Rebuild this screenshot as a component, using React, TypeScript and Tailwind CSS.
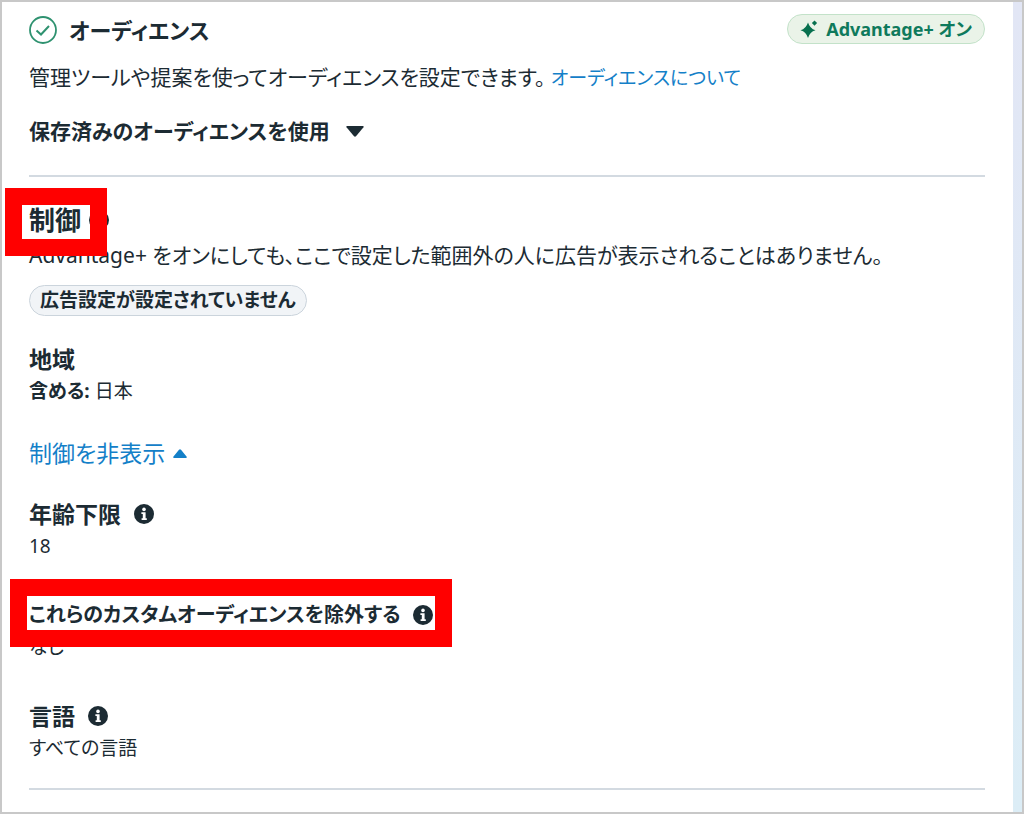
import type { ReactNode } from 'react'

function InfoButton({ label }: { label: string }) {
    return (
        <button type="button" aria-label={label} className="shrink-0 text-[#1c2b33]">
            <svg viewBox="0 0 20 20" className="size-5" aria-hidden="true">
                <circle cx="10" cy="10" r="10" fill="currentColor" />
                <circle cx="10" cy="5.4" r="1.8" fill="#fff" />
                <path d="M7.4 8.2h4.2v6h1.2v1.8H7.6v-1.8h1.2V10H7.4z" fill="#fff" />
            </svg>
        </button>
    )
}

type FieldProps = {
    title: string
    info?: boolean
    highlighted?: boolean
    className: string
    children: ReactNode
}

function Field({ title, info, highlighted, className, children }: FieldProps) {
    return (
        <section className={className}>
            <div className="relative flex h-8 w-fit items-center gap-[13px]">
                <h3 className={`leading-8 font-bold ${highlighted ? 'text-xl' : 'text-[23px]'}`}>{title}</h3>
                {info && <InfoButton label={`${title}の詳細`} />}
                {highlighted && (
                    <span className="pointer-events-none absolute -inset-x-[19px] -top-5 -bottom-4 border-[17px] border-[#ff0000]" />
                )}
            </div>
            <p className="text-[19px] leading-8">{children}</p>
        </section>
    )
}

export default function App() {
    return (
        <div
            lang="ja"
            className="flex min-h-screen border-2 border-[#c8c8c8] bg-white font-['Noto_Sans','Noto_Sans_CJK_JP',sans-serif] text-[#1c2b33] [font-feature-settings:'palt']"
        >
            <main className="min-w-0 flex-1 pr-7 pb-5 pl-[27px]">
                <header className="flex items-start justify-between pt-3">
                    <div className="flex items-center gap-3">
                        <svg viewBox="0 0 28 28" className="size-7" fill="none" stroke="#2f9270" aria-hidden="true">
                            <circle cx="14" cy="14" r="13" strokeWidth="1.8" />
                            <path d="M7.5 14.5l4.5 4 8-8.5" strokeWidth="2" />
                        </svg>
                        <h1 className="text-[22px] leading-8 font-bold">オーディエンス</h1>
                    </div>
                    <span className="flex h-[30px] items-center gap-2 rounded-full border border-[#c3e2c9] bg-[#eaf3e8] px-3 text-lg font-bold text-[#0f7a5c]">
                        <svg viewBox="0 0 18 18" className="size-[18px]" fill="#08704f" aria-hidden="true">
                            <path d="M8 2.5Q9.8 8.500 15.500 10.300Q9.800 12 8 18Q6.200 12 .5 10.300Q6.200 8.500 8 2.500z" />
                            <path d="M14.5.5l2.6 2.6-2.6 2.6-2.6-2.6z" />
                        </svg>
                        Advantage+ オン
                    </span>
                </header>

                <p className="mt-[15px] text-[21px] leading-8">
                    管理ツールや提案を使ってオーディエンスを設定できます。{' '}
                    <a href="#about" className="text-[19px] text-[#1480c8]">
                        オーディエンスについて
                    </a>
                </p>

                <button type="button" className="mt-[21px] flex items-center gap-4 text-[21px] leading-8 font-bold">
                    保存済みのオーディエンスを使用
                    <svg viewBox="0 0 18 11" className="h-[11px] w-[18px]" fill="currentColor" aria-hidden="true">
                        <path d="M1 0h16q1 .5.5 1.3L10 10.3q-1 .9-2 0L.5 1.3Q0 .5 1 0z" />
                    </svg>
                </button>

                <hr className="mt-7 border-t-2 border-[#d3dae1]" />

                <section className="mt-[27px]">
                    <div className="relative flex h-8 w-fit items-center gap-2">
                        <h2 className="text-[26px] leading-8 font-bold">制御</h2>
                        <InfoButton label="制御の詳細" />
                        <span className="pointer-events-none absolute -top-4 -left-6 h-[68px] w-[102px] border-[17px] border-[#ff0000]" />
                    </div>
                    <p className="mt-[3px] text-[21px] leading-8">
                        Advantage+ をオンにしても、ここで設定した範囲外の人に広告が表示されることはありません。
                    </p>
                    <span className="mt-3.5 inline-flex h-[31px] items-center rounded-full border border-[#cbd4dc] bg-[#f1f4f7] px-2.5 text-[19px] font-bold">
                        広告設定が設定されていません
                    </span>
                </section>

                <Field title="地域" className="mt-[27px]">
                    <b>含める:</b> 日本
                </Field>

                <button type="button" className="mt-[30px] flex items-center gap-2 text-[23px] leading-8 text-[#1480c8]">
                    制御を非表示
                    <svg viewBox="0 0 14 9" className="h-[9px] w-3.5" fill="currentColor" aria-hidden="true">
                        <path d="M1 9h12q1.300-.6.500-1.500L8 .7Q7 0 6 .7L.5 7.500Q-.3 8.400 1 9z" />
                    </svg>
                </button>

                <Field title="年齢下限" info className="mt-[29px]">
                    18
                </Field>
                <Field title="これらのカスタムオーディエンスを除外する" info highlighted className="mt-[37px]">
                    なし
                </Field>
                <Field title="言語" info className="mt-[37px]">
                    すべての言語
                </Field>

                <hr className="mt-6 border-t-2 border-[#d3dae1]" />
            </main>
            <div className="w-[9px] shrink-0 bg-linear-to-b from-[#e2e6f5] to-[#dcedf6]" />
        </div>
    )
}
